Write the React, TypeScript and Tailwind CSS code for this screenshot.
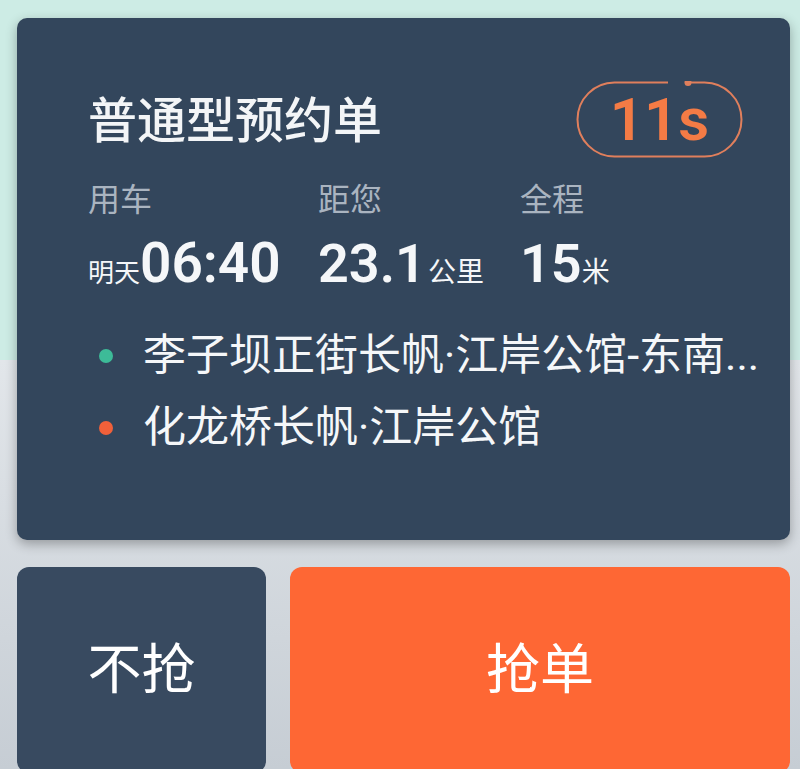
export default function App() {
  return (
    <div className="h-[769px] w-[800px] overflow-hidden bg-[linear-gradient(to_bottom,#cdece5_0px,#cdece5_360px,#e2e6ea_360px,#c6cdd4_769px)] pl-[17px] pr-[10px] pt-[18px] font-[Roboto,'Noto_Sans_CJK_SC',sans-serif]">
      <div className="h-[522px] rounded-[10px] bg-[#33465c] pl-[71px] pr-[47px] pt-[63px] shadow-[0_4px_12px_rgba(0,0,0,0.3)]">
        <div className="flex h-[77px] items-center justify-between">
          <h1 className="mt-[4px] text-[49px] font-medium leading-none text-[#f3f5f7]">普通型预约单</h1>
          <div className="relative flex h-[77px] w-[167px] items-center justify-center">
            <svg className="absolute inset-0" width="167" height="77" viewBox="0 0 167 77" fill="none">
              <path
                d="M112 1.5 H128.5 A37 37 0 0 1 128.5 75.5 H38.5 A37 37 0 0 1 38.5 1.5 H92"
                stroke="#e07f5c"
                strokeWidth="2"
              />
              <circle cx="112" cy="1.5" r="3.5" fill="#e07f5c" />
            </svg>
            <span className="text-[60px] font-semibold leading-none text-[#f47b45]">11s</span>
          </div>
        </div>

        <div className="mt-[26px] flex text-[32px] leading-none text-[#aab4c0]">
          <span className="w-[230px]">用车</span>
          <span className="w-[202px]">距您</span>
          <span>全程</span>
        </div>

        <div className="mt-[20px] flex items-baseline text-[#f5f7f9]">
          <div className="flex w-[230px] items-baseline">
            <span className="text-[26px] leading-none">明天</span>
            <span className="text-[55px] font-semibold leading-none">06:40</span>
          </div>
          <div className="flex w-[202px] items-baseline">
            <span className="text-[54px] font-semibold leading-none">23.1</span>
            <span className="ml-[2px] text-[28px] leading-none">公里</span>
          </div>
          <div className="flex items-baseline">
            <span className="text-[54px] font-semibold leading-none">15</span>
            <span className="text-[28px] leading-none">米</span>
          </div>
        </div>

        <div className="mt-[43px] flex flex-col gap-[29px] text-[43px] leading-none text-[#f5f7f9]">
          <div className="flex items-center">
            <span className="ml-[11px] h-[14px] w-[14px] shrink-0 rounded-full bg-[#3dbb98]" />
            <span className="ml-[30px] whitespace-nowrap">李子坝正街长帆·江岸公馆-东南...</span>
          </div>
          <div className="flex items-center">
            <span className="ml-[11px] h-[14px] w-[14px] shrink-0 rounded-full bg-[#f0603a]" />
            <span className="ml-[30px] whitespace-nowrap">化龙桥长帆·江岸公馆</span>
          </div>
        </div>
      </div>

      <div className="mt-[27px] flex h-[206px] gap-[24px]">
        <button className="flex w-[249px] items-center justify-center rounded-[12px] bg-[#384a60] pt-[2px] text-[54px] leading-none text-white">
          不抢
        </button>
        <button className="flex flex-1 items-center justify-center rounded-[12px] bg-[#fe6734] pt-[2px] text-[54px] leading-none text-white">
          抢单
        </button>
      </div>
    </div>
  );
}
